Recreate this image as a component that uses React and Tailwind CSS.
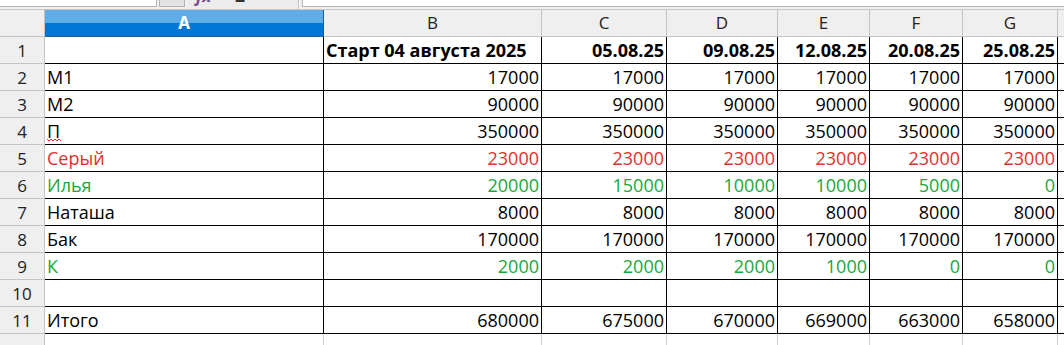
import React from "react";

const cols = [
  { key: "A", w: "w-[279px]" },
  { key: "B", w: "w-[218px]" },
  { key: "C", w: "w-[125px]" },
  { key: "D", w: "w-[111px]" },
  { key: "E", w: "w-[92px]" },
  { key: "F", w: "w-[93px]" },
  { key: "G", w: "w-[95px]" },
];

const RED = "text-[#e0302f]";
const GREEN = "text-[#17a83a]";

const rows = [
  { n: 1, bold: true, cells: ["", "Старт 04 августа 2025", "05.08.25", "09.08.25", "12.08.25", "20.08.25", "25.08.25"] },
  { n: 2, cells: ["M1", "17000", "17000", "17000", "17000", "17000", "17000"] },
  { n: 3, cells: ["M2", "90000", "90000", "90000", "90000", "90000", "90000"] },
  { n: 4, spell: true, cells: ["П", "350000", "350000", "350000", "350000", "350000", "350000"] },
  { n: 5, color: RED, cells: ["Серый", "23000", "23000", "23000", "23000", "23000", "23000"] },
  { n: 6, color: GREEN, cells: ["Илья", "20000", "15000", "10000", "10000", "5000", "0"] },
  { n: 7, cells: ["Наташа", "8000", "8000", "8000", "8000", "8000", "8000"] },
  { n: 8, cells: ["Бак", "170000", "170000", "170000", "170000", "170000", "170000"] },
  { n: 9, color: GREEN, cells: ["К", "2000", "2000", "2000", "1000", "0", "0"] },
  { n: 10, cells: ["", "", "", "", "", "", ""] },
  { n: 11, cells: ["Итого", "680000", "675000", "670000", "669000", "663000", "658000"] },
];

function Toolbar() {
  return (
    <div className="h-[10px] flex bg-[#f0f0f0] border-b border-[#c8c8c8] overflow-hidden">
      <div className="w-[157px] h-[7px] bg-white border-b border-r border-[#b4b4b4]" />
      <div className="ml-[2px] w-[26px] h-[7px] bg-[#e2e2e2] border border-t-0 border-[#b4b4b4]" />
      <div className="ml-[3px] w-[111px] h-[9px] bg-[#ececec] border-r border-[#c8c8c8] relative">
        <span className="absolute left-[8px] -top-[13px] italic font-bold text-[17px] text-[#7b4b8c] leading-none">fx</span>
        <span className="absolute left-[47px] -top-[13px] font-bold text-[17px] text-[#333] leading-none">Σ</span>
      </div>
      <div className="ml-[3px] flex-1 h-[7px] bg-white border-b border-l border-[#b4b4b4]" />
    </div>
  );
}

// spell-check squiggle
function Squiggle() {
  return (
    <svg
      className="absolute left-0 top-[16px]"
      width="14"
      height="4"
      viewBox="0 0 14 4"
      fill="none"
    >
      <path d="M0 1 L2 3 L4 1 L6 3 L8 1 L10 3 L12 1 L14 3" stroke="#e8262b" strokeWidth="1" />
    </svg>
  );
}

export default function App() {
  return (
    <div
      className="w-[1064px] h-[345px] overflow-hidden bg-white"
      style={{ fontFamily: '"Open Sans", "Noto Sans", sans-serif' }}
    >
      <Toolbar />
      {/* column header */}
      <div className="flex h-[27px] text-[17px] text-[#222]">
        <div className="w-[45px] shrink-0 bg-[#efefef] border-r border-b border-[#c4c4c4]" />
        {cols.map((c) =>
          c.key === "A" ? (
            <div
              key={c.key}
              className={`${c.w} shrink-0 flex flex-col border-r border-b border-[#1f5f99] relative`}
            >
              <div className="h-[13px] bg-[#60ace6]" />
              <div className="flex-1 bg-[#0077d6]" />
              <span className="absolute inset-0 flex items-center justify-center text-white font-bold">
                A
              </span>
            </div>
          ) : (
            <div
              key={c.key}
              className={`${c.w} shrink-0 flex items-center justify-center bg-[#efefef] border-r border-b border-[#c4c4c4]`}
            >
              {c.key}
            </div>
          )
        )}
        <div className="flex-1 bg-[#efefef] border-b border-[#c4c4c4]" />
      </div>

      {rows.map((r) => (
        <div key={r.n} className="flex h-[27px] text-[18px] leading-none">
          <div className="w-[45px] shrink-0 bg-[#efefef] border-r border-b border-[#c4c4c4] flex items-center justify-center text-[17px] text-[#222]">
            {r.n}
          </div>
          {cols.map((c, i) => {
            // text in B1 stays left aligned, numbers/dates go right
            const right = i > 1 || (i === 1 && !r.bold);
            const color = r.color || "text-black";
            return (
              <div
                key={c.key}
                className={`${c.w} shrink-0 flex items-center border-r border-b border-black ${
                  right ? "justify-end pr-[2px]" : "pl-[2px]"
                } ${color} ${r.bold ? "font-bold" : ""} whitespace-nowrap`}
              >
                {r.spell && i === 0 ? (
                  <span className="relative">
                    {r.cells[i]}
                    <Squiggle />
                  </span>
                ) : (
                  r.cells[i]
                )}
              </div>
            );
          })}
          <div className="flex-1 border-b border-black" />
        </div>
      ))}

      {/* partial row 12 */}
      <div className="flex h-[27px] text-[17px]">
        <div className="w-[45px] shrink-0 bg-[#efefef] border-r border-[#c4c4c4] flex justify-center pt-[6px] text-[#222]">
          12
        </div>
        {cols.map((c) => (
          <div key={c.key} className={`${c.w} shrink-0 border-r border-[#d0d0d0]`} />
        ))}
      </div>
    </div>
  );
}
